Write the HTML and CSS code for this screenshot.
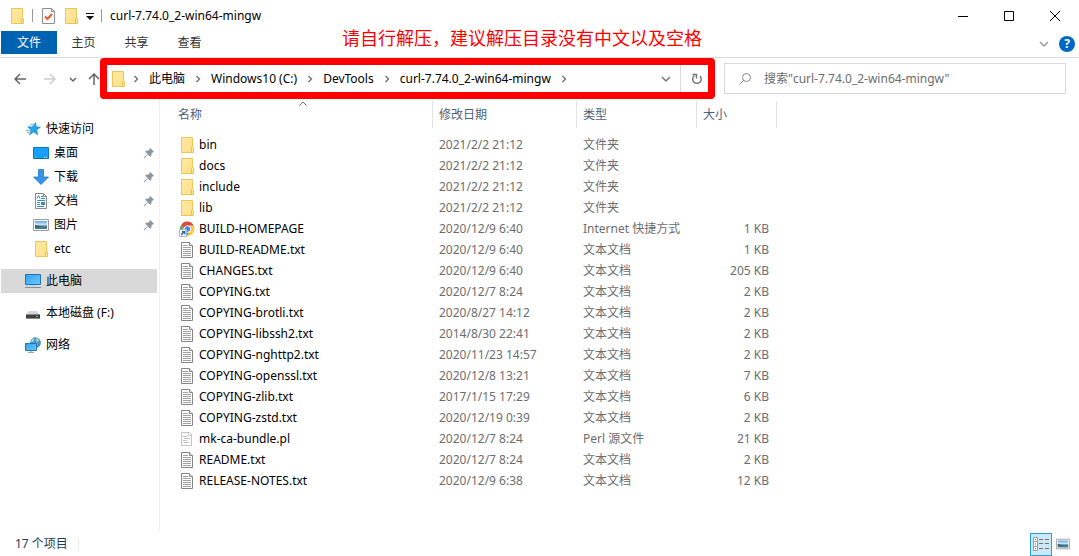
FILE: index.html
```html
<!DOCTYPE html>
<html lang="zh-CN">
<head>
<meta charset="utf-8">
<meta name="viewport" content="width=device-width, initial-scale=1">
<title>curl-7.74.0_2-win64-mingw</title>
<link rel="stylesheet" href="styles.css">
</head>
<body>
<svg class="sprite" aria-hidden="true">
  <defs>
    <linearGradient id="gold" x1="0" y1="0" x2="1" y2="1"><stop offset="0" stop-color="#ffe9a2"/><stop offset="1" stop-color="#ffe08a"/></linearGradient>
    <linearGradient id="sky" x1="0" y1="0" x2="1" y2="1"><stop offset="0" stop-color="#30a4f4"/><stop offset="1" stop-color="#6cc8ff"/></linearGradient>
    <linearGradient id="photo" x1="0" y1="0" x2="0" y2="1"><stop offset="0" stop-color="#5ea5e6"/><stop offset=".5" stop-color="#d9eefa"/><stop offset=".6" stop-color="#557f85"/><stop offset="1" stop-color="#3c76a8"/></linearGradient>
  </defs>
  <symbol id="folder" viewBox="0 0 16 16"><path d="M2.500.5h11v15h-11z" fill="url(#gold)" stroke="#ecc658"/><path d="M12.500 15V10.500l1-1 1 1v5h-2z" fill="#ffe794" stroke="#e5b93d" stroke-width=".8"/></symbol>
  <symbol id="text" viewBox="0 0 16 16"><path d="M2.500.5h8l3 3v12h-11z" fill="#fff" stroke="#858585"/><path d="M10.500.5v3h3" fill="#eee" stroke="#858585"/><path d="M4 3.500h5M4 5.500h8M4 7.500h8M4 9.500h8M4 11.500h8M4 13.500h8" stroke="#a2a2a2"/></symbol>
  <symbol id="script" viewBox="0 0 16 16"><path d="M2.500 1.500h8l2 2v11h-10z" fill="#fcfcfc" stroke="#c5c5c5"/><path d="M9.500 1.500v3h3" fill="none" stroke="#c5c5c5"/><path d="M4 5.500h4M5 7.500h6M4 9.500h4M5 11.500h5" stroke="#bdc3c7"/></symbol>
  <symbol id="chrome" viewBox="0 0 16 16"><path d="M2.100 4A7.200 7.200 0 0 1 14.800 4.700H8.500A3.300 3.300 0 0 0 5.200 8z" fill="#dd4b3e"/><path d="M14.800 4.700A7.200 7.200 0 0 1 8 15L11.500 9.500A3.300 3.300 0 0 0 10 4.700z" fill="#fbcb43"/><path d="M2.100 4A7.200 7.200 0 0 0 8 15l2.500-4A3.500 3.500 0 0 1 5.200 9.500z" fill="#35a65a"/><circle cx="8.500" cy="8" r="3.500" fill="#fff"/><circle cx="8.500" cy="8" r="2.700" fill="#4187ee"/><path d="M.5 8.500h7v7h-7z" fill="#fff" stroke="#a9b2ba"/><path d="M2 14.200c0-2 .8-2.900 2.200-3H3V10h3.500v3.500H5.300v-1.200C4 12.300 3.500 13 3.500 14.200z" fill="#2467a9"/></symbol>
  <symbol id="star" viewBox="0 0 16 16"><path d="M10.500 1.500l.8 4.300 4.200.4-3.700 2.600.8 5-3.800-2.800-4.300 2.800 1.500-4.800-3.200-2.900 4.500-.2z" fill="#26a5eb" stroke="#1686cb" stroke-width=".6"/><path d="M5 3.500h3M3 5.500h3M1 9.500h4M2 11.500h2" stroke="#79bfe6"/></symbol>
  <symbol id="desktop" viewBox="0 0 16 16"><path d="M.5 2.500h15v11H.5z" fill="#16a0fc" stroke="#0878cd"/><path d="M1 13.500h14" stroke="#0767ad"/><path d="M2 12.500h1M11 12.500h1M13 12.500h1" stroke="#fff"/></symbol>
  <symbol id="download" viewBox="0 0 16 16"><path d="M5.500.5h5v7.500h5L8 15.500.5 8h5z" fill="#3593e8" stroke="#2377c5" stroke-width=".8"/></symbol>
  <symbol id="document" viewBox="0 0 16 16"><path d="M2.500.5h8l3 3v12h-11z" fill="#fff" stroke="#8a8a8a"/><path d="M10.500.5v3h3" fill="none" stroke="#8a8a8a"/><path d="M4 5.500l1.500-3 1.500 3M8 3.500h2M8 5.500h4M4 7.500h8M4 9.500h3M4 11.500h3M4 13.500h7" fill="none" stroke="#3290c9"/><path d="M8 9h4v3H8z" fill="#4889a0"/></symbol>
  <symbol id="picture" viewBox="0 0 16 16"><path d="M.5 2.500h15v11H.5z" fill="#fff" stroke="#9b9b9b"/><path d="M2 4h12v8H2z" fill="url(#photo)"/><path d="M2 8l4 1 3 1H2z" fill="#315d55"/></symbol>
  <symbol id="computer" viewBox="0 0 16 16"><path d="M.5 1.500h15v10H.5z" fill="url(#sky)" stroke="#2672a9"/><path d="M5 12.500h6" stroke="#bdd1df"/><path d="M0 14.500h16" stroke="#7794ab"/></symbol>
  <symbol id="disk" viewBox="0 0 16 16"><path d="M4 6h8l3 4H1z" fill="#d5d5d5"/><path d="M1 9.500h14v4H1z" fill="#3c4040"/><path d="M1 13.500h14" stroke="#8c8c8c"/><path d="M11 11.500h2" stroke="#3ee450"/></symbol>
  <symbol id="network" viewBox="0 0 16 16"><circle cx="10.500" cy="5.700" r="5.400" fill="#4a91bd"/><path d="M7 2c2-1 3 1 2 2s-3 1-3 1zM11 1c2 0 3 2 3 3s-2 0-2 1 1 3 0 4z" fill="#a6d3e8"/><path d="M.5 6.500h11v7H.5z" fill="url(#sky)" stroke="#2376b4"/><path d="M3 15.500h6" stroke="#8aa9bd"/><path d="M6 14v1" stroke="#789"/></symbol>
  <symbol id="pin" viewBox="0 0 12 12"><path d="M7.200 1L11 4.800 9.700 5.500 8.500 6.700 8.300 9 7.300 9.800 4.900 7.400 1.500 11.200.8 11.200.8 10.500 4.600 7.100 2.200 4.700 3 3.700 5.300 3.500 6.500 2.300z" fill="#8b969d"/></symbol>
  <symbol id="right" viewBox="0 0 8 8"><path d="M2.500 1L5.500 4 2.500 7" fill="none" stroke="#6b6b6b" stroke-width="1.300"/></symbol>
  <symbol id="down" viewBox="0 0 10 10"><path d="M1 3l4 4 4-4" fill="none" stroke="currentColor" stroke-width="1.500"/></symbol>
</svg>
<div class="window">
  <header class="titlebar">
    <div class="quick">
      <svg class="icon"><use href="#folder"/></svg>
      <span class="rule"></span>
      <button class="plain" aria-label="属性"><svg class="icon" viewBox="0 0 16 16"><path d="M2.500.5h9l3 3v12h-12z" fill="#f8f8f8" stroke="#8e8e8e"/><path d="M11.500.5v3h3" fill="none" stroke="#8e8e8e"/><path d="M5 8.500l2.500 2.500 4.500-5" fill="none" stroke="#e85b28" stroke-width="2"/></svg></button>
      <button class="plain" aria-label="新建文件夹"><svg class="icon"><use href="#folder"/></svg></button>
      <button class="plain" aria-label="自定义快速访问工具栏"><svg class="small" viewBox="0 0 8 8"><path d="M0 1.500h8" stroke="#111"/><path d="M0 4h8L4 8z" fill="#111"/></svg></button>
      <span class="rule"></span>
    </div>
    <h1>curl-7.74.0_2-win64-mingw</h1>
    <div class="controls">
      <button aria-label="最小化"><svg viewBox="0 0 10 10"><path d="M0 5.500h10"/></svg></button>
      <button aria-label="最大化"><svg viewBox="0 0 10 10"><path d="M.5.5h9v9h-9z"/></svg></button>
      <button aria-label="关闭"><svg viewBox="0 0 10 10"><path d="M0 0l10 10M10 0L0 10"/></svg></button>
    </div>
    <p class="note">请自行解压，建议解压目录没有中文以及空格</p>
  </header>
  <nav class="tabs">
    <button class="file">文件</button><button>主页</button><button>共享</button><button>查看</button>
    <div class="tabend">
      <button class="plain" aria-label="展开功能区"><svg class="caret"><use href="#down"/></svg></button>
      <button class="help" aria-label="帮助">?</button>
    </div>
  </nav>
  <div class="toolbar">
    <div class="history">
      <button class="plain back" aria-label="后退"><svg viewBox="0 0 12 12"><path d="M12 6H1M6 1L1 6l5 5"/></svg></button>
      <button class="plain forward" aria-label="前进"><svg viewBox="0 0 12 12"><path d="M0 6h11M6 1l5 5-5 5"/></svg></button>
      <button class="plain recent" aria-label="最近位置"><svg viewBox="0 0 10 10"><path d="M2 4l3 3 3-3"/></svg></button>
      <button class="plain up" aria-label="上移"><svg viewBox="0 0 12 12"><path d="M6 12V1M1 6l5-5 5 5"/></svg></button>
    </div>
    <div class="address">
      <svg class="icon"><use href="#folder"/></svg>
      <ol class="crumbs">
        <li><svg><use href="#right"/></svg><a href="#">此电脑</a></li>
        <li><svg><use href="#right"/></svg><a href="#">Windows10 (C:)</a></li>
        <li><svg><use href="#right"/></svg><a href="#">DevTools</a></li>
        <li><svg><use href="#right"/></svg><a href="#">curl-7.74.0_2-win64-mingw</a></li>
        <li><svg><use href="#right"/></svg></li>
      </ol>
      <button class="plain drop" aria-label="以前的位置"><svg class="caret"><use href="#down"/></svg></button>
      <button class="plain refresh" aria-label="刷新"><svg viewBox="0 0 12 12"><path d="M3.500 2.500A4.300 4.300 0 1 0 9 3" fill="none" stroke="#777" stroke-width="1.500"/><path d="M1.500 1.500h4v4" fill="none" stroke="#777" stroke-width="1.500"/></svg></button>
    </div>
    <label class="search">
      <svg viewBox="0 0 12 12"><circle cx="7.500" cy="4.500" r="4" /><path d="M4.500 7.500L.5 11.500"/></svg>
      <input type="search" aria-label="搜索" placeholder='搜索"curl-7.74.0_2-win64-mingw"'>
    </label>
  </div>
  <div class="content">
    <aside class="sidebar">
      <ul>
        <li><a href="#"><svg class="icon"><use href="#star"/></svg>快速访问</a></li>
        <li class="sub"><a href="#"><svg class="icon"><use href="#desktop"/></svg>桌面<svg class="pin"><use href="#pin"/></svg></a></li>
        <li class="sub"><a href="#"><svg class="icon"><use href="#download"/></svg>下载<svg class="pin"><use href="#pin"/></svg></a></li>
        <li class="sub"><a href="#"><svg class="icon"><use href="#document"/></svg>文档<svg class="pin"><use href="#pin"/></svg></a></li>
        <li class="sub"><a href="#"><svg class="icon"><use href="#picture"/></svg>图片<svg class="pin"><use href="#pin"/></svg></a></li>
        <li class="sub"><a href="#"><svg class="icon"><use href="#folder"/></svg>etc</a></li>
      </ul>
      <ul><li><a class="selected" href="#"><svg class="icon"><use href="#computer"/></svg>此电脑</a></li></ul>
      <ul><li><a href="#"><svg class="icon"><use href="#disk"/></svg>本地磁盘 (F:)</a></li></ul>
      <ul><li><a href="#"><svg class="icon"><use href="#network"/></svg>网络</a></li></ul>
    </aside>
    <main>
      <table>
        <colgroup><col class="c-name"><col class="c-date"><col class="c-type"><col class="c-size"></colgroup>
        <thead><tr><th>名称<svg class="sort" viewBox="0 0 8 5"><path d="M.5 4.500L4 1l3.500 3.500"/></svg></th><th>修改日期</th><th>类型</th><th>大小</th></tr></thead>
        <tbody>
          <tr><td><span><svg class="icon"><use href="#folder"/></svg>bin</span></td><td>2021/2/2 21:12</td><td>文件夹</td><td></td></tr>
          <tr><td><span><svg class="icon"><use href="#folder"/></svg>docs</span></td><td>2021/2/2 21:12</td><td>文件夹</td><td></td></tr>
          <tr><td><span><svg class="icon"><use href="#folder"/></svg>include</span></td><td>2021/2/2 21:12</td><td>文件夹</td><td></td></tr>
          <tr><td><span><svg class="icon"><use href="#folder"/></svg>lib</span></td><td>2021/2/2 21:12</td><td>文件夹</td><td></td></tr>
          <tr><td><span><svg class="icon"><use href="#chrome"/></svg>BUILD-HOMEPAGE</span></td><td>2020/12/9 6:40</td><td>Internet 快捷方式</td><td>1 KB</td></tr>
          <tr><td><span><svg class="icon"><use href="#text"/></svg>BUILD-README.txt</span></td><td>2020/12/9 6:40</td><td>文本文档</td><td>1 KB</td></tr>
          <tr><td><span><svg class="icon"><use href="#text"/></svg>CHANGES.txt</span></td><td>2020/12/9 6:40</td><td>文本文档</td><td>205 KB</td></tr>
          <tr><td><span><svg class="icon"><use href="#text"/></svg>COPYING.txt</span></td><td>2020/12/7 8:24</td><td>文本文档</td><td>2 KB</td></tr>
          <tr><td><span><svg class="icon"><use href="#text"/></svg>COPYING-brotli.txt</span></td><td>2020/8/27 14:12</td><td>文本文档</td><td>2 KB</td></tr>
          <tr><td><span><svg class="icon"><use href="#text"/></svg>COPYING-libssh2.txt</span></td><td>2014/8/30 22:41</td><td>文本文档</td><td>2 KB</td></tr>
          <tr><td><span><svg class="icon"><use href="#text"/></svg>COPYING-nghttp2.txt</span></td><td>2020/11/23 14:57</td><td>文本文档</td><td>2 KB</td></tr>
          <tr><td><span><svg class="icon"><use href="#text"/></svg>COPYING-openssl.txt</span></td><td>2020/12/8 13:21</td><td>文本文档</td><td>7 KB</td></tr>
          <tr><td><span><svg class="icon"><use href="#text"/></svg>COPYING-zlib.txt</span></td><td>2017/1/15 17:29</td><td>文本文档</td><td>6 KB</td></tr>
          <tr><td><span><svg class="icon"><use href="#text"/></svg>COPYING-zstd.txt</span></td><td>2020/12/19 0:39</td><td>文本文档</td><td>2 KB</td></tr>
          <tr><td><span><svg class="icon"><use href="#script"/></svg>mk-ca-bundle.pl</span></td><td>2020/12/7 8:24</td><td>Perl 源文件</td><td>21 KB</td></tr>
          <tr><td><span><svg class="icon"><use href="#text"/></svg>README.txt</span></td><td>2020/12/7 8:24</td><td>文本文档</td><td>2 KB</td></tr>
          <tr><td><span><svg class="icon"><use href="#text"/></svg>RELEASE-NOTES.txt</span></td><td>2020/12/9 6:38</td><td>文本文档</td><td>12 KB</td></tr>
        </tbody>
      </table>
    </main>
  </div>
  <footer class="status">
    <span class="count">17 个项目</span>
    <div class="views">
      <button class="view on" aria-label="详细信息"><svg viewBox="0 0 18 14"><path d="M1.500.5h4v13h-4zM1.500 4.500h4M1.500 9.500h4" fill="#fff" stroke="#9b9b9b"/><path d="M7 2.500h4M13 2.500h4M7 6.500h4M13 6.500h4M7 11.500h4M13 11.500h4" stroke="#727272"/><path d="M3 2.500h1" stroke="#456"/><path d="M3 7h1" stroke="#18e"/><path d="M3 11.500h1" stroke="#d22"/></svg></button>
      <button class="view" aria-label="大缩略图"><svg class="thumb"><use href="#picture"/></svg></button>
    </div>
  </footer>
</div>
</body>
</html>
```
FILE: styles.css
```css
* { box-sizing: border-box; }
body { margin: 0; background: #fff; color: #000; font: 12px/16px "Noto Sans", "Noto Sans CJK SC", sans-serif; }
button, input { font: inherit; color: inherit; }
button { border: 0; background: none; padding: 0; }
a { color: inherit; text-decoration: none; }
ul, ol { list-style: none; margin: 0; padding: 0; }
svg { display: block; flex: none; }
.sprite { position: absolute; width: 0; height: 0; }
.icon { width: 16px; height: 16px; }
.small { width: 8px; height: 8px; }
.caret { width: 10px; height: 10px; }
.window { min-height: 100vh; display: flex; flex-direction: column; }

.titlebar { position: relative; display: flex; align-items: center; height: 31px; padding: 0 1px 0 9px; }
.quick { display: flex; align-items: center; gap: 7px; }
.rule { width: 1px; height: 13px; background: #999; }
h1 { flex: 1; margin: 0 0 0 8px; font-size: 12px; font-weight: 400; }
.controls { display: flex; }
.controls button { width: 46px; height: 31px; display: grid; place-items: center; }
.controls svg { width: 10px; height: 10px; fill: none; stroke: #000; }
.note { position: absolute; left: 342px; top: 26px; margin: 0; color: #f00; font-size: 18px; line-height: 24px; white-space: nowrap; }

.tabs { display: flex; align-items: flex-start; height: 27px; padding: 0 4px 0 1px; border-bottom: 1px solid #dadada; color: #333; }
.tabs > button { width: 53px; height: 23px; }
.tabs > .file { width: 56px; background: #0063b1; color: #fff; }
.tabend { margin-left: auto; display: flex; align-items: center; gap: 10px; height: 26px; color: #999; }
.help { width: 16px; height: 16px; border-radius: 50%; background: #0067c5; color: #fff; font-weight: 700; }

.toolbar { display: grid; grid-template-columns: 100px minmax(0, 615fr) minmax(0, 351fr); height: 41px; padding-right: 13px; }
.history { display: flex; align-items: center; padding-left: 14px; }
.history svg { width: 12px; height: 12px; fill: none; stroke: #666; stroke-width: 1.5px; }
.forward { margin-left: 18px; }
.history .forward svg { stroke: #ccc; }
.recent { margin-left: 12px; }
.history .recent svg { width: 10px; height: 10px; }
.up { margin-left: 10px; }
.address { display: flex; align-items: center; border: 7px solid #f00; border-radius: 4px; padding-left: 3px; }
.crumbs { flex: 1; display: flex; align-items: center; min-width: 0; white-space: nowrap; }
.crumbs li { display: flex; align-items: center; }
.crumbs svg { width: 8px; height: 8px; margin: 0 9px; }
.crumbs li:first-child svg { margin-left: 6px; }
.drop { width: 28px; display: grid; place-items: center; color: #777; }
.refresh { width: 28px; padding-left: 4px; align-self: stretch; display: grid; place-items: center; border-left: 1px solid #d9d9d9; }
.refresh svg { width: 12px; height: 12px; }
.search { display: flex; align-items: center; gap: 13px; height: 31px; margin: 5px 0 0 9px; padding: 0 14px; border: 1px solid #d9d9d9; }
.search svg { width: 12px; height: 12px; fill: none; stroke: #888; }
.search input { flex: 1; min-width: 0; border: 0; padding: 0; outline: 0; background: none; }
.search input::placeholder { color: #6d6d6d; opacity: 1; }

.content { flex: 1; display: flex; }
.sidebar { width: 160px; padding: 18px 2px 0 1px; border-right: 1px solid #f0f0f0; display: flex; flex-direction: column; gap: 8px; }
.sidebar a { display: flex; align-items: center; gap: 5px; height: 24px; padding: 0 2px 0 24px; }
.sidebar .sub a { padding-left: 32px; }
.selected { background: #d9d9d9; }
.pin { width: 12px; height: 12px; margin-left: auto; }
main { flex: 1; padding-top: 2px; }
table { table-layout: fixed; width: 617px; border-collapse: separate; border-spacing: 0; }
.c-name { width: 273px; }
.c-date { width: 144px; }
.c-type { width: 120px; }
.c-size { width: 80px; }
th { position: relative; height: 27px; padding: 0 6px; border-right: 1px solid #e2e2e2; color: #4c607a; font-weight: 400; text-align: left; }
th:first-child { padding-left: 18px; }
.sort { position: absolute; left: 139px; top: 0; width: 8px; height: 5px; fill: none; stroke: #666; }
tbody::before { content: ""; display: table-row; height: 6px; }
td { height: 21px; padding: 0 6px; color: #6d6d6d; white-space: nowrap; }
td:first-child { padding-left: 19px; color: #000; }
td:last-child { padding-right: 8px; text-align: right; }
td span { display: flex; align-items: center; gap: 4px; }

.status { display: flex; align-items: center; height: 24px; padding: 0 5px 0 15px; color: #1e3c5a; }
.count { padding-right: 10px; border-right: 1px solid #eee; line-height: 12px; }
.views { margin-left: auto; display: flex; }
.view { width: 22px; height: 23px; display: grid; place-items: center; }
.view.on { border: 1px solid #26a0da; background: #cce8f6; }
.view.on svg { width: 18px; height: 14px; }
.thumb { width: 14px; height: 14px; }
```
